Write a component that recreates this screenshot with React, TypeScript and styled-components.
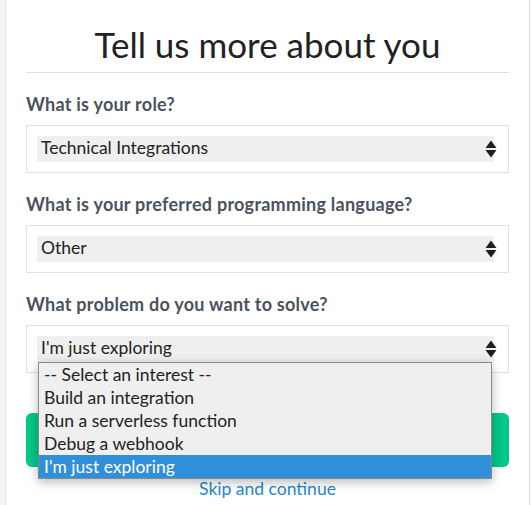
import React from "react";
import styled, { createGlobalStyle } from "styled-components";

const Global = createGlobalStyle`
  html, body { margin: 0; padding: 0; background: #f4f5f8; }
  body { font-family: Lato, "Open Sans", sans-serif; overflow: hidden; }
  * { box-sizing: border-box; }
`;

const Page = styled.div`
  padding: 0 2px 0 5px;
  height: 505px;
  overflow: hidden;
`;

const Card = styled.div`
  margin-top: -3px;
  width: 525px;
  min-height: 560px;
  background: #fff;
  border: 1px solid #e1e4e9;
  border-radius: 4px;
  padding: 0 20px;
  display: flex;
  flex-direction: column;
`;

const Title = styled.h1`
  margin: 0;
  padding: 26px 0 8px;
  font-size: 35px;
  line-height: 40px;
  font-weight: 400;
  color: #222;
  text-align: center;
  border-bottom: 1px solid #dde1e6;
`;

const Group = styled.div`
  margin-top: 19px;
  display: flex;
  flex-direction: column;
`;

const Label = styled.label`
  font-size: 18px;
  letter-spacing: 0.25px;
  line-height: 24px;
  font-weight: 700;
  color: #4a535e;
  margin-bottom: 9px;
`;

const SelectBox = styled.div`
  position: relative;
  height: 48px;
  border: 1px solid #dfe2e7;
  padding: 10px 14px 10px 10px;
`;

const SelectField = styled.div`
  height: 26px;
  background: #efefef;
  padding: 0 0 3px 4px;
  font-size: 17.5px;
  line-height: 23px;
  color: #222;
`;

const Arrows = styled.svg`
  position: absolute;
  right: 11px;
  top: 14px;
  width: 12px;
  height: 18px;
`;

const Popup = styled.ul`
  position: absolute;
  left: 11px;
  top: 36px;
  width: 454px;
  margin: 0;
  padding: 0;
  list-style: none;
  background: #efefef;
  border: 1px solid #8a8a8a;
  box-shadow: 0 3px 10px rgba(0, 0, 0, 0.28);
  z-index: 2;
`;

const Option = styled.li<{ $active?: boolean }>`
  height: 23px;
  padding: 0 0 0 5px;
  font-size: 17.5px;
  line-height: 23px;
  white-space: nowrap;
  color: ${(p) => (p.$active ? "#fff" : "#222")};
  background: ${(p) => (p.$active ? "#308fd9" : "transparent")};
`;

const Button = styled.button`
  margin-top: 40px;
  height: 54px;
  border: none;
  border-radius: 6px;
  background: #00c987;
  color: #fff;
  font-family: inherit;
  font-size: 18px;
  font-weight: 700;
`;

const Skip = styled.a`
  margin-top: 10px;
  align-self: center;
  font-size: 17.5px;
  line-height: 24px;
  color: #2587d0;
  text-decoration: none;
`;

const ArrowIcon = () => (
  <Arrows viewBox="0 0 12 18">
    <path d="M0.5 8 L6 0.5 L11.5 8 Z" fill="#1e1e1e" />
    <path d="M0.5 10 L6 17.5 L11.5 10 Z" fill="#1e1e1e" />
  </Arrows>
);

const options = [
  "-- Select an interest --",
  "Build an integration",
  "Run a serverless function",
  "Debug a webhook",
  "I'm just exploring",
];

export default function App() {
  return (
    <Page>
      <Global />
      <Card>
        <Title>Tell us more about you</Title>
        <Group>
          <Label>What is your role?</Label>
          <SelectBox>
            <SelectField>Technical Integrations</SelectField>
            <ArrowIcon />
          </SelectBox>
        </Group>
        <Group>
          <Label>What is your preferred programming language?</Label>
          <SelectBox>
            <SelectField>Other</SelectField>
            <ArrowIcon />
          </SelectBox>
        </Group>
        <Group>
          <Label>What problem do you want to solve?</Label>
          <SelectBox>
            <SelectField>I'm just exploring</SelectField>
            <ArrowIcon />
            <Popup>
              {options.map((o, i) => (
                <Option key={o} $active={i === options.length - 1}>
                  {o}
                </Option>
              ))}
            </Popup>
          </SelectBox>
        </Group>
        <Button>Continue</Button>
        <Skip href="#">Skip and continue</Skip>
      </Card>
    </Page>
  );
}
